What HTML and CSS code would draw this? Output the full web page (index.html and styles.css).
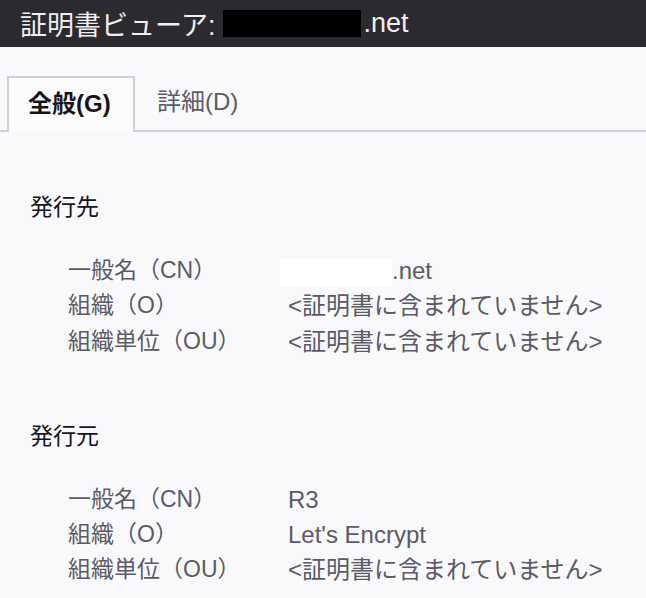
FILE: index.html
```html
<!DOCTYPE html>
<html lang="ja">
<head>
    <meta charset="UTF-8">
    <title>証明書ビューア</title>
    <link rel="stylesheet" href="styles.css">
</head>
<body>
<div class="titlebar">証明書ビューア:<span class="mask-black"></span>.net</div>

<div class="tabs">
    <div class="tab active">全般(G)</div>
    <div class="tab">詳細(D)</div>
</div>

<div class="content">
    <div class="section">
        <h2>発行先</h2>
        <div class="rows">
            <div class="label">一般名（CN）</div>
            <div class="value"><span class="mask-white"></span>.net</div>
            <div class="label">組織（O）</div>
            <div class="value">&lt;証明書に含まれていません&gt;</div>
            <div class="label">組織単位（OU）</div>
            <div class="value">&lt;証明書に含まれていません&gt;</div>
        </div>
    </div>

    <div class="section">
        <h2>発行元</h2>
        <div class="rows">
            <div class="label">一般名（CN）</div>
            <div class="value">R3</div>
            <div class="label">組織（O）</div>
            <div class="value">Let's Encrypt</div>
            <div class="label">組織単位（OU）</div>
            <div class="value">&lt;証明書に含まれていません&gt;</div>
        </div>
    </div>
</div>
</body>
</html>
```

FILE: styles.css
```css
*{ margin:0; padding:0; box-sizing:border-box;}
body{ background:#f9f9fb; font-family:"Liberation Sans", "Noto Sans CJK JP", sans-serif; color:#15141a; overflow:hidden;}

.titlebar{ height:47px; background:#2b2a2f; color:#f0f0f4; font-size:27px; padding-left:20px; display:flex; align-items:center;}
.mask-black{ display:inline-block; width:138px; height:27px; background:#000; margin:0 2px 0 8px;}

.tabs{ display:flex; margin-top:29px; padding-left:7px; border-bottom:2px solid #cfcfd8; height:56px;}
.tab{ height:54px; padding:0 22px; font-size:24px; line-height:52px; color:#5b5b66;}
.tab.active{ width:128px; padding:0 0 0 19px; border:2px solid #cfcfd8; border-bottom:none; height:56px; margin-bottom:-2px; background:#fbfbfc; color:#15141a; font-weight:bold;}

.content{ padding:58px 0 0 30px;}
.section + .section{ margin-top:60px;}
.section h2{ font-size:23px; font-weight:normal; line-height:35px; color:#15141a;}

.rows{ display:grid; grid-template-columns:220px auto; margin:28px 0 0 38px; font-size:23px; line-height:35.3px; color:#5b5b66;}
.value{ font-size:24px;}
.mask-white{ display:inline-block; width:112px; height:28px; background:#fff; margin-left:-8px; vertical-align:middle;}
```
